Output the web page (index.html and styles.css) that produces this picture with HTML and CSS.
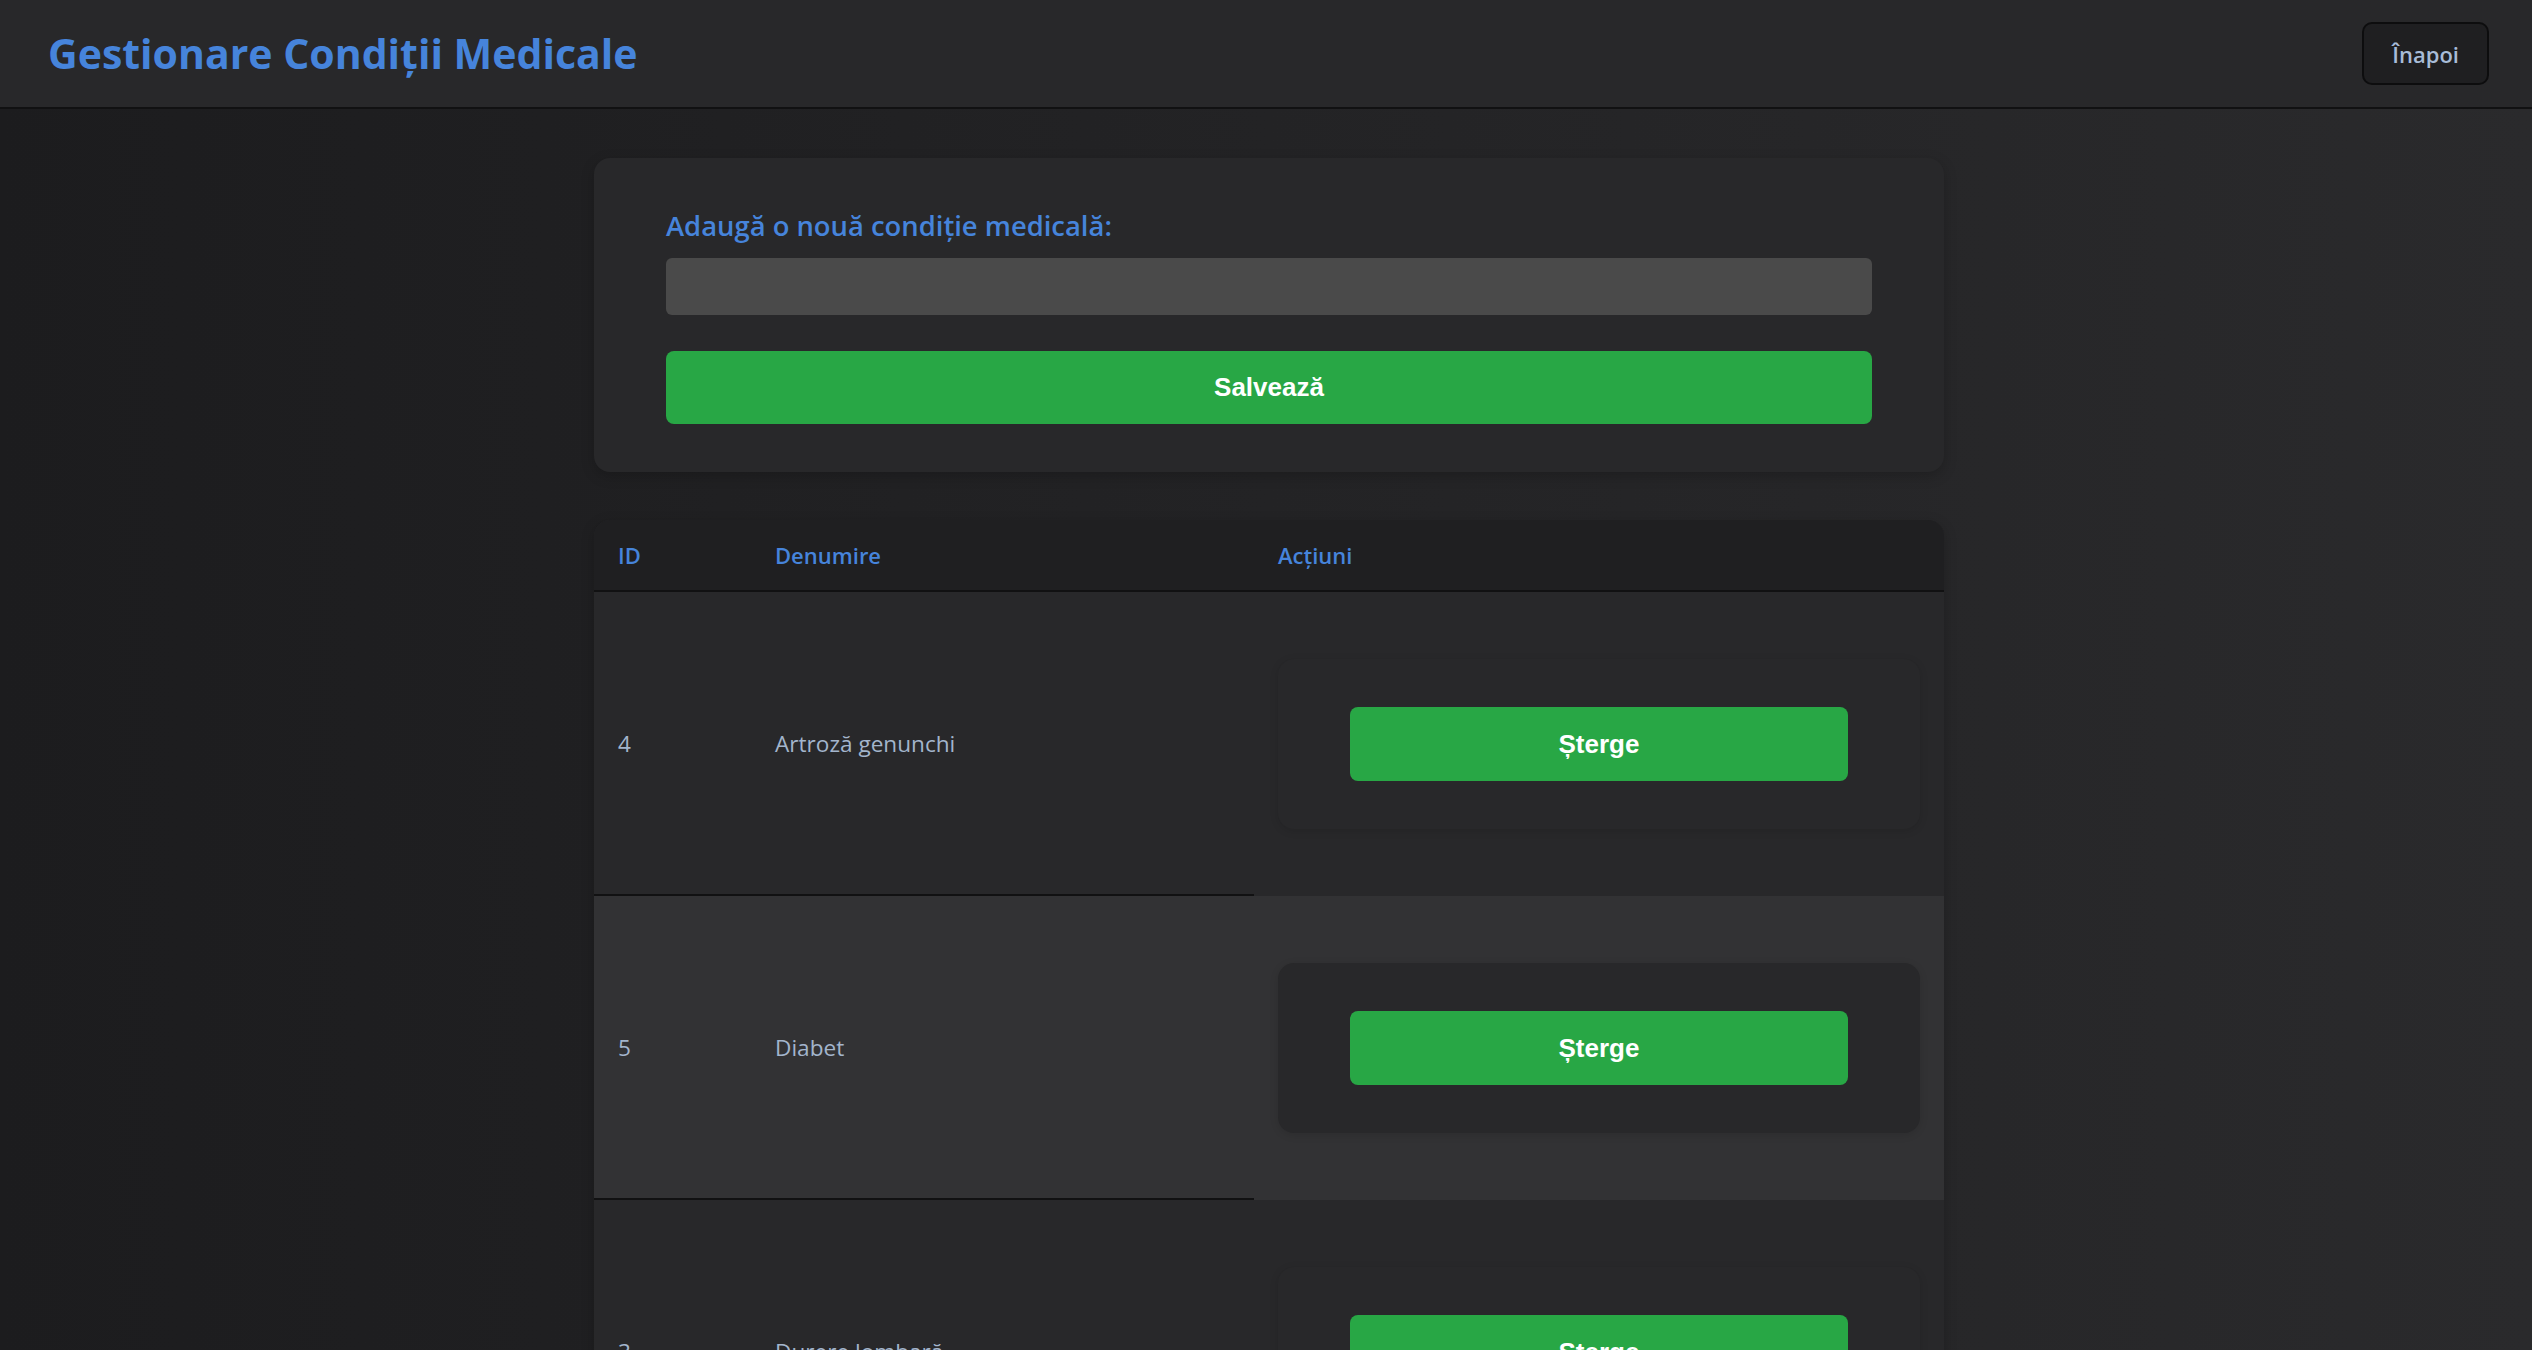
FILE: index.html
```html
<!DOCTYPE html>
<html lang="ro">
<head>
<meta charset="utf-8">
<title>Gestionare Condiții Medicale</title>
<link rel="stylesheet" href="styles.css">
</head>
<body>
<header class="topbar">
  <h1 class="title">Gestionare Condiții Medicale</h1>
  <button class="back-btn" type="button">Înapoi</button>
</header>
<main class="page">
  <div class="container">
    <section class="card form-card">
      <label class="form-label" for="cond">Adaugă o nouă condiție medicală:</label>
      <input class="form-input" id="cond" type="text">
      <button class="btn-green btn-save" type="button">Salvează</button>
    </section>
    <div class="table-wrap">
      <table class="cond-table">
        <thead>
          <tr>
            <th class="col-id">ID</th>
            <th class="col-name">Denumire</th>
            <th class="col-act">Acțiuni</th>
          </tr>
        </thead>
        <tbody>
          <tr>
            <td class="cell">4</td>
            <td class="cell">Artroză genunchi</td>
            <td class="cell-act"><div class="action-card"><button class="btn-green btn-del" type="button">Șterge</button></div></td>
          </tr>
          <tr>
            <td class="cell">5</td>
            <td class="cell">Diabet</td>
            <td class="cell-act"><div class="action-card"><button class="btn-green btn-del" type="button">Șterge</button></div></td>
          </tr>
          <tr>
            <td class="cell">3</td>
            <td class="cell">Durere lombară</td>
            <td class="cell-act"><div class="action-card"><button class="btn-green btn-del" type="button">Șterge</button></div></td>
          </tr>
        </tbody>
      </table>
    </div>
  </div>
</main>
</body>
</html>
```
FILE: styles.css
```css
html, body {
  margin: 0;
  padding: 0;
}
body {
  min-height: 100vh;
  font-family: "Open Sans", "Noto Sans", sans-serif;
  background: linear-gradient(to right, #1c1c1e 0%, #232325 50%, #2a2a2c 100%);
  color: #a3b5cc;
}
.topbar {
  height: 107px;
  display: flex;
  align-items: center;
  justify-content: space-between;
  padding: 0 43px 0 48px;
  background: #28282a;
  border-bottom: 2px solid #111112;
}
.title {
  margin: 0;
  font-size: 41px;
  font-weight: 700;
  color: #4684db;
  line-height: 1.2;
}
.back-btn {
  height: 63px;
  padding: 0 28px;
  background: #1f1f21;
  border: 2px solid #0d0d0e;
  border-radius: 10px;
  color: #a8bcd8;
  font-family: "Open Sans", "Noto Sans", sans-serif;
  font-size: 22px;
  font-weight: 600;
}
.page {
  padding: 49px 0 0 6px;
}
.container {
  width: 1350px;
  margin: 0 auto;
}
.card {
  background: #28282a;
  border-radius: 16px;
  box-shadow: 0 4px 14px rgba(0, 0, 0, 0.2);
}
.form-card {
  padding: 48px 72px;
  margin-bottom: 48px;
  display: flex;
  flex-direction: column;
}
.form-label {
  font-size: 27.4px;
  font-weight: 600;
  color: #4684db;
  line-height: 40px;
  margin-bottom: 12px;
}
.form-input {
  height: 57px;
  box-sizing: border-box;
  border: none;
  border-radius: 6px;
  background: #4a4a4a;
  color: #ddd;
  font-size: 22px;
  padding: 0 16px;
}
.btn-green {
  display: block;
  width: 100%;
  border: none;
  border-radius: 8px;
  background: #28a745;
  color: #ffffff;
  font-family: "Liberation Sans", Arial, sans-serif;
  font-weight: 700;
  font-size: 26px;
}
.btn-save {
  margin-top: 36px;
  height: 73px;
}
.btn-del {
  height: 74px;
}
.table-wrap {
  border-radius: 16px;
  overflow: hidden;
  background: #28282a;
  box-shadow: 0 4px 14px rgba(0, 0, 0, 0.2);
}
.cond-table {
  width: 100%;
  border-collapse: separate;
  border-spacing: 0;
  table-layout: fixed;
}
.col-id { width: 157px; }
.col-name { width: 503px; }
.cond-table th {
  height: 72px;
  box-sizing: border-box;
  padding: 0 24px;
  text-align: left;
  background: #1f1f21;
  color: #4684db;
  font-size: 22px;
  font-weight: 600;
  border-bottom: 2px solid #111112;
}
.cond-table tbody tr:nth-child(even) {
  background: #323234;
}
.cell {
  padding: 24px;
  font-size: 22.6px;
  color: #a3b5cc;
  vertical-align: middle;
  border-bottom: 2px solid #111112;
}
.cell-act {
  padding: 24px;
  vertical-align: middle;
}
.action-card {
  margin: 43px 0;
  padding: 48px 72px;
  background: #28282a;
  border-radius: 16px;
  box-shadow: 0 2px 8px rgba(0, 0, 0, 0.12);
}
```
